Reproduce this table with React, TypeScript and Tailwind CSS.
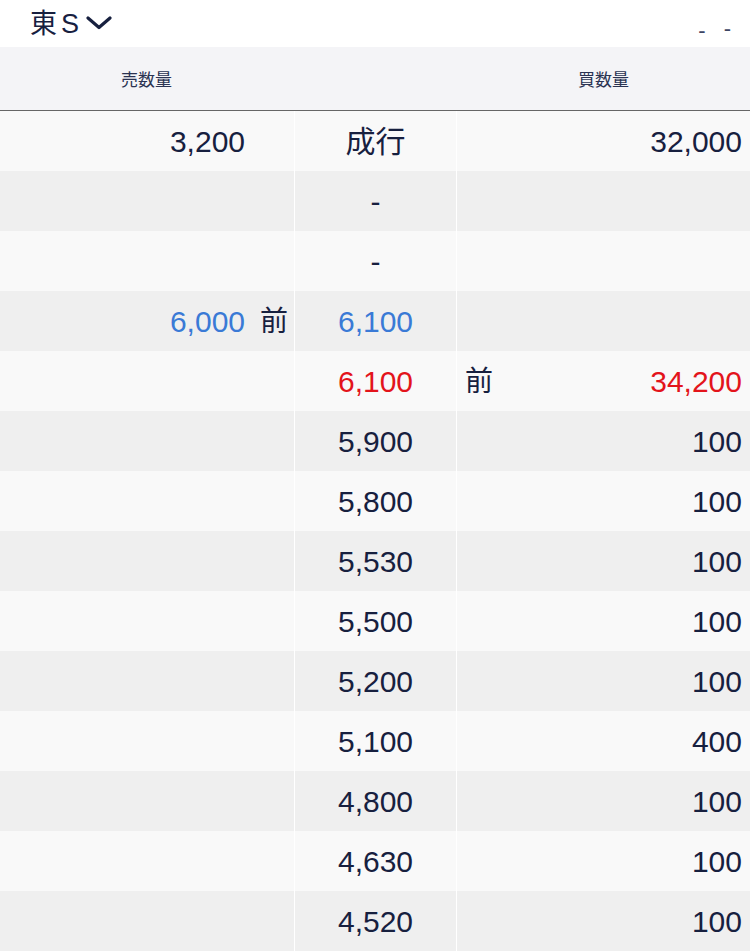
import React from "react";

type Row = {
  sell?: string;
  sellColor?: string;
  sellMae?: boolean;
  price: string;
  priceColor?: string;
  buy?: string;
  buyColor?: string;
  buyMae?: boolean;
};

const NAVY = "text-[#17203f]";
const BLUE = "text-[#3a7ad6]";
const RED = "text-[#e3141b]";

const rows: Row[] = [
  { sell: "3,200", price: "成行", buy: "32,000" },
  { price: "-" },
  { price: "-" },
  { sell: "6,000", sellColor: BLUE, sellMae: true, price: "6,100", priceColor: BLUE },
  { price: "6,100", priceColor: RED, buy: "34,200", buyColor: RED, buyMae: true },
  { price: "5,900", buy: "100" },
  { price: "5,800", buy: "100" },
  { price: "5,530", buy: "100" },
  { price: "5,500", buy: "100" },
  { price: "5,200", buy: "100" },
  { price: "5,100", buy: "400" },
  { price: "4,800", buy: "100" },
  { price: "4,630", buy: "100" },
  { price: "4,520", buy: "100" },
];

export default function App() {
  return (
    <div
      className={`w-[750px] h-[951px] overflow-hidden bg-white ${NAVY}`}
      style={{ fontFamily: '"Liberation Sans", "Noto Sans CJK JP", sans-serif' }}
    >
      {/* 上部バー */}
      <div className="h-[47px] flex items-center justify-between pl-[30px] pr-[19px]">
        <div className="flex items-center gap-[7px] pt-[2px]">
          <span className="text-[27px] leading-none">
            東<span className="ml-[4px]">S</span>
          </span>
          <svg width="26" height="14" viewBox="0 0 26 14" fill="none" className="-translate-y-[2px]">
            <path d="M2 2 L13 11.5 L24 2" stroke="#17203f" strokeWidth="3.2" strokeLinecap="round" strokeLinejoin="round" />
          </svg>
        </div>
        <div className="flex items-center gap-[18px] text-[22px] text-[#3d4563] pt-[10px]">
          <span className="translate-y-[2px]">-</span>
          <span>-</span>
        </div>
      </div>

      {/* ヘッダー */}
      <div className="h-[64px] bg-[#f4f4f7] border-b border-[#666] grid grid-cols-[295px_162px_1fr] items-center text-[17px] text-[#2a3352] pt-[4px]">
        <div className="text-center pr-[2px]">売数量</div>
        <div />
        <div className="text-center">買数量</div>
      </div>

      {/* 板 */}
      {rows.map((r, i) => (
        <div
          key={i}
          className={`h-[60px] grid grid-cols-[295px_162px_1fr] text-[30px] ${i % 2 === 0 ? "bg-[#f9f9f9]" : "bg-[#efefef]"}`}
        >
          <div className="border-r border-white flex items-center justify-end pt-[1px]">
            <span className={r.sellColor ?? NAVY}>{r.sell}</span>
            <span className="w-[49px] pl-[15px] text-[28px]">{r.sellMae ? "前" : ""}</span>
          </div>
          <div className={`border-r border-white flex items-center justify-center pt-[1px] ${r.priceColor ?? NAVY}`}>
            {r.price}
          </div>
          <div className="flex items-center justify-between pl-[8px] pr-[8px] pt-[1px]">
            <span className="text-[28px]">{r.buyMae ? "前" : ""}</span>
            <span className={r.buyColor ?? NAVY}>{r.buy}</span>
          </div>
        </div>
      ))}
    </div>
  );
}
